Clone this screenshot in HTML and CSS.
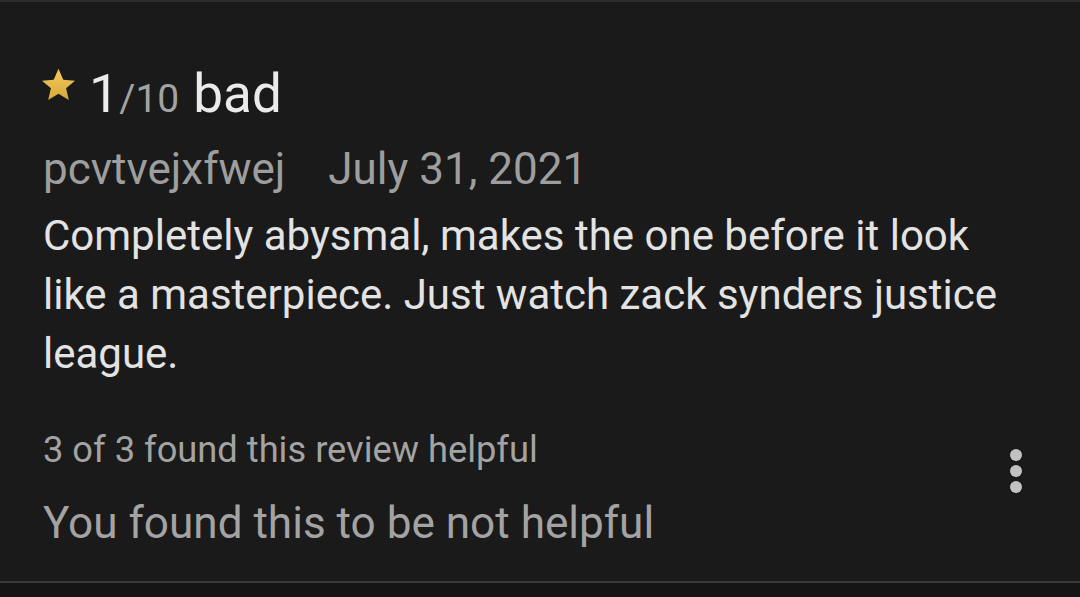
FILE: index.html
```
<!DOCTYPE html>
<html lang="en">
<head>
  <title>Review</title>
  <link rel="stylesheet" href="styles.css">
</head>
<body>
  <div class="review">
    <div class="rating">
      <svg class="star" viewBox="0 0 24 24" width="37" height="37">
        <defs>
          <linearGradient id="gold" x1="0" y1="0" x2="0" y2="1">
            <stop offset="0" stop-color="#f3c95a"/>
            <stop offset="1" stop-color="#d9a93a"/>
          </linearGradient>
        </defs>
        <path d="M12 1.8l3.1 7.1 7.6.6-5.8 5 1.8 7.5L12 18l-6.7 4 1.8-7.5-5.8-5 7.6-.6z" fill="url(#gold)"/>
      </svg>
      <span class="score">1</span><span class="outof">/10</span>
      <span class="headline">bad</span>
    </div>
    <div class="meta">
      <span class="author">pcvtvejxfwej</span>
      <span class="date">July 31, 2021</span>
    </div>
    <p class="body">Completely abysmal, makes the one before it look like a masterpiece. Just watch zack synders justice league.</p>
    <div class="footer">
      <div class="helpful">
        <div class="count"><span>3 of 3 found this review helpful</span></div>
        <div class="vote"><span>You found this to be not helpful</span></div>
      </div>
      <div class="more">
        <i></i><i></i><i></i>
      </div>
    </div>
  </div>
</body>
</html>
```
FILE: styles.css
```
body{
  margin: 0;
  background-color: #151515;
  font-family: Roboto, "Noto Sans", sans-serif;
  width: 1080px;
  height: 597px;
  overflow: hidden;
}

.review{
  background-color: #1a1a1a;
  border-top: 2px solid #2c2c2c;
  border-bottom: 2px solid #3a3a3a;
  height: 583px;
  box-sizing: border-box;
  padding: 60px 0 0 43px;
}

.rating{
  display: flex;
  align-items: baseline;
  color: #ebebeb;
}

.star{
  align-self: flex-start;
  margin: 4px 12px 0 -3px;
}

.score{
  font-size: 54px;
}

.outof{
  font-size: 39px;
  color: #a3a3a3;
  margin-right: 14px;
}

.headline{
  font-size: 53px;
}

.meta{
  font-size: 44px;
  color: #9e9e9e;
  margin-top: 18px;
}

.author{
  margin-right: 32px;
}

.body{
  font-size: 42px;
  line-height: 59px;
  color: #e3e3e3;
  margin: 11px 0 0 0;
  width: 980px;
}

.footer{
  display: flex;
  align-items: flex-start;
  margin-top: 45px;
}

.helpful{
  flex: 1;
  color: #a3a3a3;
}

.count span, .vote span{
  display: inline-block;
  transform-origin: left center;
  transform: scaleX(0.98);
  white-space: nowrap;
}

.count{
  font-size: 37px;
}

.vote{
  font-size: 45px;
  margin-top: 25px;
}

.more{
  display: flex;
  flex-direction: column;
  gap: 4px;
  margin: 21px 58px 0 0;
}

.more i{
  display: block;
  width: 12px;
  height: 12px;
  border-radius: 50%;
  background-color: #c2c2c2;
}
```
